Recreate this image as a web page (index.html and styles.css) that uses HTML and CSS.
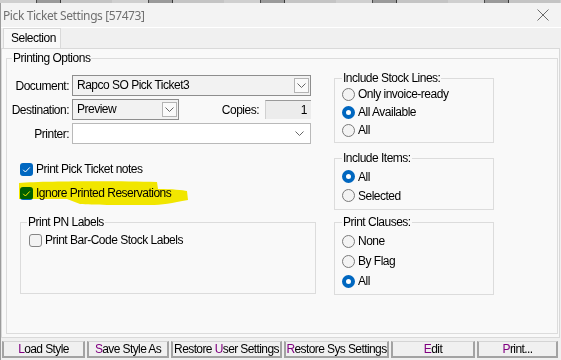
FILE: index.html
```html
<!DOCTYPE html>
<html lang="en">
<head>
    <meta charset="UTF-8">
    <title>Pick Ticket Settings</title>
    <link rel="stylesheet" href="styles.css">
</head>
<body>
    <div class="behind"></div>
    <div class="dialog">
        <div class="titlebar">
            <span class="title">Pick Ticket Settings [57473]</span>
            <svg class="close" width="12" height="12" viewBox="0 0 12 12"><path d="M0.5 0.5 L11.5 11.5 M11.5 0.5 L0.5 11.5" stroke="#6a6a6a" stroke-width="1" fill="none"/></svg>
        </div>
        <div class="tabs">
            <div class="tab">Selection</div>
        </div>
        <div class="panel">
            <fieldset class="group main">
                <legend>Printing Options</legend>
                <div class="cols">
                    <div class="left">
                        <div class="row">
                            <span class="lbl">Document:</span>
                            <div class="combo doc">Rapco SO Pick Ticket3
                                <span class="ddbtn"><svg width="9" height="5" viewBox="0 0 9 5"><path d="M0.5 0.5 L4.5 4.5 L8.5 0.5" stroke="#666" fill="none"/></svg></span>
                            </div>
                        </div>
                        <div class="row">
                            <span class="lbl">Destination:</span>
                            <div class="combo dest">Preview
                                <span class="ddbtn"><svg width="9" height="5" viewBox="0 0 9 5"><path d="M0.5 0.5 L4.5 4.5 L8.5 0.5" stroke="#666" fill="none"/></svg></span>
                            </div>
                            <span class="lbl copies-lbl">Copies:</span>
                            <div class="copies">1</div>
                        </div>
                        <div class="row">
                            <span class="lbl">Printer:</span>
                            <div class="combo printer">
                                <svg class="chev" width="9" height="5" viewBox="0 0 9 5"><path d="M0.5 0.5 L4.5 4.5 L8.5 0.5" stroke="#666" fill="none"/></svg>
                            </div>
                        </div>
                        <div class="checks">
                            <div class="check">
                                <svg class="box" width="13" height="13" viewBox="0 0 13 13"><rect x="0" y="0" width="13" height="13" rx="3" fill="#0067c0"/><path d="M3.2 6.8 L5.4 9 L9.8 4.4" stroke="#fff" stroke-width="1" fill="none"/></svg>
                                <span>Print Pick Ticket notes</span>
                            </div>
                            <div class="check marked">
                                <svg class="mark" width="190" height="26" viewBox="0 0 190 26"><path d="M12 2 C40 0 110 0 150 1 L151 8 C165 8 176 9 180 10 L181 19 C165 22 155 24 143 24 C110 24 85 24 73 23 L60 18 L12 18 Z" fill="#f7ec00"/></svg>
                                <svg class="box" width="13" height="13" viewBox="0 0 13 13"><rect x="0" y="0" width="13" height="13" rx="3" fill="#0067c0"/><path d="M3.2 6.8 L5.4 9 L9.8 4.4" stroke="#fff" stroke-width="1" fill="none"/></svg>
                                <span>Ignore Printed Reservations</span>
                            </div>
                        </div>
                        <fieldset class="group pn">
                            <legend>Print PN Labels</legend>
                            <div class="check">
                                <svg class="box" width="13" height="13" viewBox="0 0 13 13"><rect x="0.5" y="0.5" width="12" height="12" rx="2.5" fill="#f3f3f3" stroke="#858585"/></svg>
                                <span>Print Bar-Code Stock Labels</span>
                            </div>
                        </fieldset>
                    </div>
                    <div class="right">
                        <fieldset class="group side stock">
                            <legend>Include Stock Lines:</legend>
                            <div class="radio"><span class="dot"></span>Only invoice-ready</div>
                            <div class="radio"><span class="dot on"></span>All Available</div>
                            <div class="radio"><span class="dot"></span>All</div>
                        </fieldset>
                        <fieldset class="group side items">
                            <legend>Include Items:</legend>
                            <div class="radio"><span class="dot on"></span>All</div>
                            <div class="radio"><span class="dot"></span>Selected</div>
                        </fieldset>
                        <fieldset class="group side clauses">
                            <legend>Print Clauses:</legend>
                            <div class="radio"><span class="dot"></span>None</div>
                            <div class="radio"><span class="dot"></span>By Flag</div>
                            <div class="radio"><span class="dot on"></span>All</div>
                        </fieldset>
                    </div>
                </div>
            </fieldset>
        </div>
        <div class="buttons">
            <div class="btn"><u>L</u>oad Style</div>
            <div class="btn"><u>S</u>ave Style As</div>
            <div class="btn">Restore <u>U</u>ser Settings</div>
            <div class="btn"><u>R</u>estore Sys Settings</div>
            <div class="btn"><u>E</u>dit</div>
            <div class="btn"><u>P</u>rint...</div>
        </div>
    </div>
</body>
</html>
```

FILE: styles.css
```css
body {
    margin: 0;
    background: #f0f0f0;
    font-family: "Liberation Sans", Arial, sans-serif;
    font-size: 12px;
    letter-spacing: -0.5px;
    color: #000;
    overflow: hidden;
}
.behind {
    height: 3px;
    background: repeating-linear-gradient(90deg, #cfcfcf 0 36px, #4a4a4a 36px 37px, #9a9a9a 37px 60px, #3a3a3a 60px 61px, #c4c4c4 61px 112px);
}
.dialog {
    border-left: 1px solid #9c9c9c;
    height: 357px;
    background: #f0f0f0;
}
.titlebar {
    height: 24px;
    display: flex;
    align-items: center;
    justify-content: space-between;
    padding: 0 12px 0 2px;
    background: #f3f3f3;
    border-bottom: 1px solid #ffffff;
}
.title {
    font-family: "Noto Sans", sans-serif;
    font-size: 12px;
    letter-spacing: -0.4px;
    color: #707070;
}
.tabs {
    height: 20px;
    display: flex;
    padding-left: 2px;
    background: #f0f0f0;
}
.tab {
    width: 58px;
    box-sizing: border-box;
    padding-left: 7px;
    line-height: 19px;
    background: #f9f9f9;
    border: 1px solid #d9d9d9;
    border-bottom: none;
}
.panel {
    height: 290px;
    box-sizing: border-box;
    margin-right: 1px;
    padding: 2px 1px 0 4px;
    background: #f9f9f9;
    border: 1px solid #d9d9d9;
}
.group {
    margin: 0;
    padding: 0;
    min-width: 0;
    border: 1px solid #dcdcdc;
}
.group legend {
    padding: 0 1px;
    line-height: 14px;
}
.main {
    padding-bottom: 38px;
}
.main > legend {
    margin-left: 5px;
}
.cols {
    display: flex;
}
.left {
    width: 327px;
    padding-top: 10px;
}
.row {
    display: flex;
    align-items: center;
    height: 21px;
    margin-bottom: 3px;
}
.lbl {
    width: 62px;
    margin-right: 3px;
    text-align: right;
}
.combo {
    position: relative;
    box-sizing: border-box;
    height: 21px;
    padding-left: 4px;
    line-height: 19px;
    border: 1px solid #8e8e8e;
    background: #f2f2f2;
}
.doc {
    width: 239px;
}
.dest {
    width: 107px;
}
.printer {
    width: 239px;
    background: #fff;
    border-color: #b9b9b9;
}
.ddbtn {
    position: absolute;
    right: 1px;
    top: 2px;
    width: 15px;
    height: 15px;
    box-sizing: border-box;
    border: 1px solid #b4b4b4;
    background: #fafafa;
    display: flex;
    align-items: center;
    justify-content: center;
}
.chev {
    position: absolute;
    right: 6px;
    top: 7px;
}
.copies-lbl {
    width: auto;
    margin-left: auto;
    margin-right: 6px;
}
.copies {
    width: 46px;
    height: 19px;
    box-sizing: border-box;
    padding-right: 4px;
    margin-right: 23px;
    text-align: right;
    line-height: 18px;
    background: #ececec;
    border-top: 1px solid #9a9a9a;
    border-left: 1px solid #d0d0d0;
}
.checks {
    padding: 13px 0 0 13px;
}
.check {
    position: relative;
    display: flex;
    align-items: center;
    gap: 3px;
    height: 18px;
}
.checks .check {
    margin-bottom: 6px;
}
.check span {
    position: relative;
}
.mark {
    position: absolute;
    left: -13px;
    top: -3px;
    mix-blend-mode: multiply;
    z-index: 1;
}
.box {
    flex-shrink: 0;
}
.pn {
    width: 296px;
    box-sizing: border-box;
    margin: 13px 0 0 13px;
    padding: 2px 0 44px 8px;
}
.pn legend {
    margin-left: -2px;
}
.right {
    width: 160px;
}
.side {
    padding: 0 0 3px 7px;
}
.stock {
    margin-top: 6px;
}
.items {
    margin-top: 8px;
    padding-top: 2px;
    padding-bottom: 4px;
}
.clauses {
    margin-top: 5px;
    padding-top: 2px;
}
.radio {
    display: flex;
    align-items: center;
    gap: 3px;
    height: 18px;
}
.items .radio {
    height: 19px;
}
.clauses .radio {
    height: 20px;
}
.dot {
    width: 13px;
    height: 13px;
    box-sizing: border-box;
    border-radius: 50%;
    border: 1px solid #7a7a7a;
    background: #f3f3f3;
}
.dot.on {
    border: 4.5px solid #0067c0;
    background: #fff;
}
.buttons {
    display: grid;
    grid-template-columns: 83px 82px 111px 105px 84px 81px;
    gap: 2px;
    padding: 3px 0 0 1px;
}
.btn {
    height: 17px;
    box-sizing: border-box;
    white-space: nowrap;
    overflow: hidden;
    text-align: center;
    line-height: 14px;
    letter-spacing: -0.6px;
    background: #f0f0f0;
    border: 2px solid #a3a3a3;
    border-top: 1px solid #d4d4d4;
}
.btn u {
    text-decoration: none;
    color: #800080;
}
```
